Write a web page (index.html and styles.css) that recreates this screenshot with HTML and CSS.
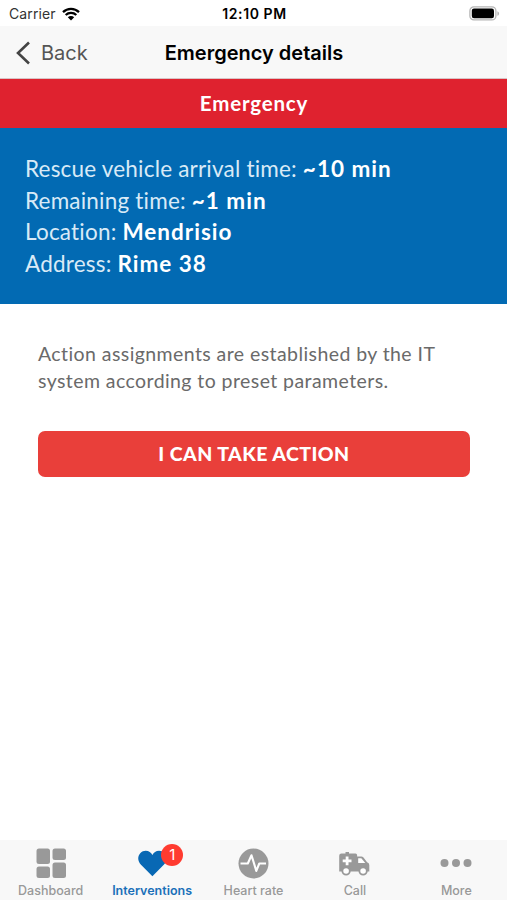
FILE: index.html
```html
<!DOCTYPE html>
<html lang="en">
<head>
    <meta charset="UTF-8">
    <meta name="viewport" content="width=device-width, initial-scale=1.0">
    <title>Emergency details</title>
    <link rel="stylesheet" href="styles.css">
</head>
<body>
    <div class="app">
        <div class="status-bar">
            <div class="carrier">
                <span class="carrier-name">Carrier</span>
                <svg width="18" height="14" viewBox="0 0 18 14">
                    <path d="M1 5.1a11.6 11.6 0 0 1 16 0M3.7 8a7.6 7.6 0 0 1 10.6 0" fill="none" stroke="#000" stroke-width="2.3"/>
                    <path d="M9 13.6L5.8 10.3a4.5 4.5 0 0 1 6.4 0z"/>
                </svg>
            </div>
            <span class="clock">12:10 PM</span>
            <svg class="battery" width="31" height="15" viewBox="0 0 31 15">
                <rect x="0.9" y="0.9" width="26" height="13" rx="4" fill="#fff" stroke="#b5b5b5" stroke-width="1.3"/>
                <rect x="2.8" y="2.6" width="22.2" height="9.6" rx="2.2"/>
                <path d="M28.4 5.2c2.2.8 2.2 3.8 0 4.6z" fill="#b5b5b5"/>
            </svg>
        </div>

        <div class="header">
            <button class="back-button">
                <svg width="15" height="24" viewBox="0 0 15 24">
                    <path d="M13 1.5L2 12l11 10.5" fill="none" stroke="#444" stroke-width="2.6"/>
                </svg>
                <span>Back</span>
            </button>
            <h1>Emergency details</h1>
        </div>

        <div class="alert">Emergency</div>

        <div class="details">
            <p>Rescue vehicle arrival time: <b>~10 min</b></p>
            <p>Remaining time: <b>~1 min</b></p>
            <p>Location: <b>Mendrisio</b></p>
            <p>Address: <b>Rime 38</b></p>
        </div>

        <div class="content">
            <p>Action assignments are established by the IT<br>system according to preset parameters.</p>
            <button class="action-button">I CAN TAKE ACTION</button>
        </div>

        <div class="tab-bar">
            <div class="tab">
                <svg width="32" height="32" viewBox="0 0 32 32" fill="#999">
                    <rect x="1.5" y="1.5" width="13.5" height="15.5" rx="2.5"/>
                    <rect x="17.5" y="1.5" width="13.5" height="11.5" rx="2.5"/>
                    <rect x="1.5" y="19.5" width="13.5" height="11.5" rx="2.5"/>
                    <rect x="17.5" y="15.5" width="13.5" height="15.5" rx="2.5"/>
                </svg>
                <span class="tab-label">Dashboard</span>
            </div>
            <div class="tab active">
                <svg width="32" height="32" viewBox="0 0 32 32" fill="#0868b4">
                    <path d="M16.4 29.3L5 17.8C-1 11.6 3.8 3.8 9.7 3.8c3.2 0 5.4 1.7 6.7 4.2 1.3-2.5 3.5-4.2 6.7-4.2 5.9 0 10.7 7.8 4.7 14z"/>
                </svg>
                <span class="badge">1</span>
                <span class="tab-label">Interventions</span>
            </div>
            <div class="tab">
                <svg width="32" height="32" viewBox="0 0 32 32">
                    <circle cx="15.5" cy="16.5" r="15" fill="#999"/>
                    <path d="M2.5 16.5h7.3l3.7-8.2 4.8 15.6 3-7.4h6.7" fill="none" stroke="#fff" stroke-width="2.1" stroke-linejoin="round"/>
                </svg>
                <span class="tab-label">Heart rate</span>
            </div>
            <div class="tab">
                <svg width="32" height="32" viewBox="0 0 32 32">
                    <path d="M2.5 6.5h4V5H10v1.5h6.5q1.6 0 1.6 1.6v1.4h4.2q1.3 0 2.2 1l3.6 4.7q2.2.6 2.2 2.8v6.5H.2V8.8q0-2.3 2.3-2.3z" fill="#999"/>
                    <path d="M6.7 9.5h2.8v3h3v2.8h-3v3H6.7v-3h-3v-2.8h3z" fill="#fff"/>
                    <path d="M19.2 11.3h3.1l4 4.8h-7.1z" fill="#fff"/>
                    <circle cx="7.1" cy="24" r="3.7" fill="#fff" stroke="#999" stroke-width="1.8"/>
                    <circle cx="24.1" cy="24" r="3.7" fill="#fff" stroke="#999" stroke-width="1.8"/>
                </svg>
                <span class="tab-label">Call</span>
            </div>
            <div class="tab">
                <svg width="32" height="32" viewBox="0 0 32 32" fill="#999">
                    <circle cx="4.5" cy="16" r="4"/>
                    <circle cx="16" cy="16" r="4"/>
                    <circle cx="27.5" cy="16" r="4"/>
                </svg>
                <span class="tab-label">More</span>
            </div>
        </div>
    </div>
</body>
</html>
```
FILE: styles.css
```css
* {
    box-sizing: border-box;
}

body {
    font-family: 'Inter', sans-serif;
    margin: 0;
    background-color: white;
}

h1, p {
    margin: 0;
}

button {
    border: none;
    padding: 0;
    cursor: pointer;
}

.app {
    display: flex;
    flex-direction: column;
    height: 900px;
    width: 507px;
    overflow: hidden;
}

.status-bar {
    display: grid;
    grid-template-columns: 1fr auto 1fr;
    align-items: center;
    height: 26px;
    padding: 1px 7px 0 9px;
    font-size: 14px;
}

.carrier {
    display: flex;
    align-items: center;
    gap: 6px;
    color: #333;
}

.carrier-name {
    letter-spacing: 0.1px;
}

.clock {
    font-weight: 600;
    letter-spacing: 0.6px;
}

.battery {
    justify-self: end;
}

.header {
    display: grid;
    grid-template-columns: 1fr auto 1fr;
    align-items: center;
    height: 53px;
    padding: 1px 15px 0 16px;
    background-color: #f8f8f8;
    border-bottom: 1px solid #d8c4c6;
}

.header h1 {
    font-size: 20px;
    font-weight: 600;
}

.back-button {
    display: flex;
    align-items: center;
    gap: 10px;
    background: none;
    color: #555;
    font-family: inherit;
    font-size: 20px;
}

.alert {
    height: 49px;
    line-height: 49px;
    padding-left: 1px;
    background-color: #df222f;
    color: white;
    text-align: center;
    font-family: 'Lato', sans-serif;
    font-size: 20.5px;
    font-weight: 700;
    letter-spacing: 0.8px;
}

.details {
    height: 176px;
    padding: 25px;
    background-color: #026ab3;
    color: #d9eaf7;
    font-family: 'Lato', sans-serif;
    font-size: 22.5px;
    line-height: 31.6px;
    letter-spacing: 0.2px;
    font-variant-ligatures: none;
    white-space: nowrap;
}

.details b {
    color: white;
    font-weight: 700;
    letter-spacing: 1px;
}

.content {
    flex: 1;
    padding: 37px 37px 0 38px;
    font-family: 'Lato', sans-serif;
}

.content p {
    color: #6a6a6a;
    font-size: 19.5px;
    line-height: 26.5px;
    letter-spacing: 0.42px;
    white-space: nowrap;
}

.action-button {
    display: block;
    width: 100%;
    height: 46px;
    margin-top: 37px;
    padding-bottom: 2px;
    background-color: #e93f3a;
    color: white;
    border-radius: 7px;
    font-family: inherit;
    font-size: 19.5px;
    font-weight: 900;
    letter-spacing: 0.45px;
}

.tab-bar {
    display: flex;
    height: 60px;
    padding-top: 7px;
    background-color: #f8f8f8;
}

.tab {
    position: relative;
    display: flex;
    flex: 1;
    flex-direction: column;
    align-items: center;
    color: #999;
    font-size: 12.5px;
    font-weight: 500;
}

.tab-label {
    margin-top: 4px;
    line-height: 16px;
}

.tab.active {
    color: #1a70b8;
    font-weight: 600;
}

.badge {
    position: absolute;
    top: -3px;
    left: 60px;
    width: 22px;
    height: 22px;
    border-radius: 50%;
    background-color: #ff3b30;
    color: white;
    font-size: 15px;
    font-weight: 400;
    line-height: 22px;
    text-align: center;
}
```
